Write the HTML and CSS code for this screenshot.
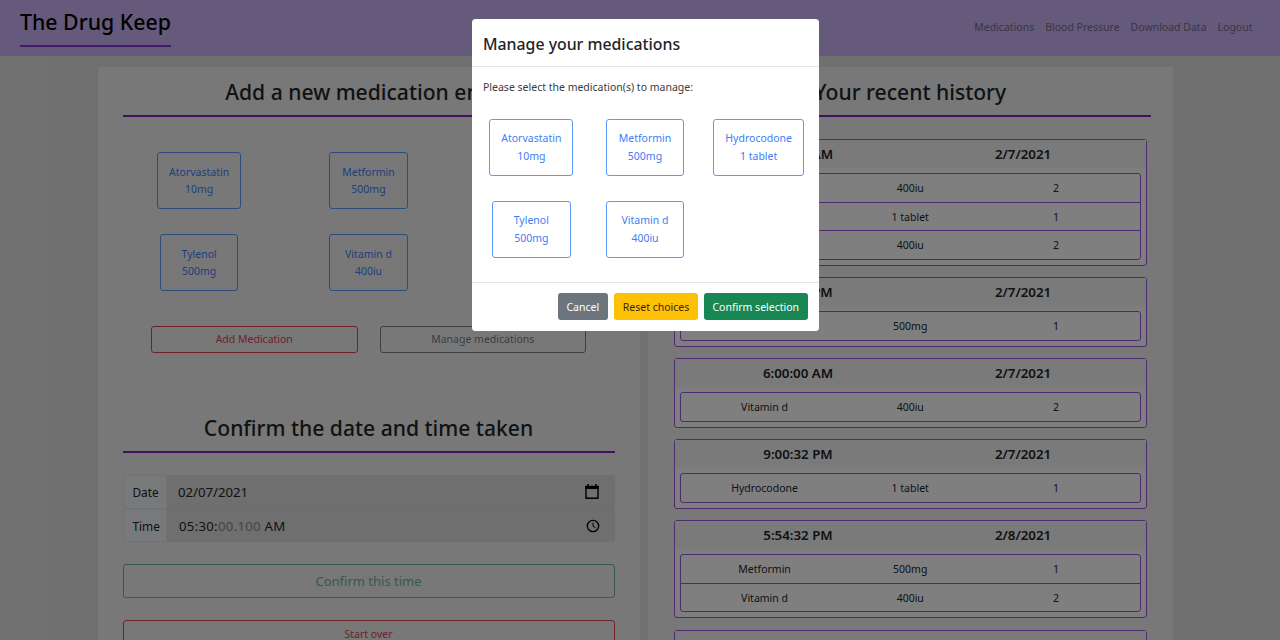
FILE: index.html
```html
<!DOCTYPE html>
<html lang="en">
<head>
<meta charset="utf-8">
<title>The Drug Keep</title>
<link rel="stylesheet" href="styles.css">
</head>
<body>
<header class="topbar">
  <h1 class="brand">The Drug Keep</h1>
  <nav class="nav"><a>Medications</a><a>Blood Pressure</a><a>Download Data</a><a>Logout</a></nav>
</header>
<main class="columns">
  <section class="panel entry">
    <h2 class="heading first">Add a new medication entry</h2>
    <div class="meds">
      <div class="cell"><button class="med">Atorvastatin<br>10mg</button></div>
      <div class="cell"><button class="med">Metformin<br>500mg</button></div>
      <div class="cell"></div>
      <div class="cell"><button class="med">Tylenol<br>500mg</button></div>
      <div class="cell"><button class="med">Vitamin d<br>400iu</button></div>
    </div>
    <div class="actions">
      <button class="btn danger">Add Medication</button>
      <button class="btn muted">Manage medications</button>
    </div>
    <h2 class="heading">Confirm the date and time taken</h2>
    <div class="field">
      <label class="field-label date-label">Date</label>
      <div class="field-input"><span>02/07/2021</span>
        <svg class="cal" viewBox="0 0 14 15"><path d="M1 2.5h12v11.7H1z" fill="none" stroke="#000" stroke-width="1.4"/><path d="M.4 2h13.200v3H.4zM2.300 0h1.500v3H2.300zM10.200 0h1.500v3h-1.500z"/></svg>
      </div>
    </div>
    <div class="field second">
      <label class="field-label">Time</label>
      <div class="field-input"><span>05:30:<i class="dim">00.100</i> AM</span>
        <svg class="clock" viewBox="0 0 14 14"><circle cx="7" cy="7" r="5.700" fill="none" stroke="#000" stroke-width="1.300"/><path d="M7 3.700v3.500l2.500 1.600" fill="none" stroke="#000" stroke-width="1"/></svg>
      </div>
    </div>
    <button class="btn confirm">Confirm this time</button>
    <button class="btn danger restart">Start over</button>
  </section>
  <section class="panel history">
    <h2 class="heading">Your recent history</h2>
    <div class="log">
      <article class="card"><div class="card-head"><b>6:00:00 AM</b><b>2/7/2021</b></div>
        <div class="doses"><div class="dose"><span>Vitamin d</span><span>400iu</span><span>2</span></div><div class="dose"><span>Tylenol</span><span>1 tablet</span><span>1</span></div><div class="dose"><span>Vitamin d</span><span>400iu</span><span>2</span></div></div></article>
      <article class="card"><div class="card-head"><b>5:30:00 PM</b><b>2/7/2021</b></div>
        <div class="doses"><div class="dose"><span>Metformin</span><span>500mg</span><span>1</span></div></div></article>
      <article class="card"><div class="card-head"><b>6:00:00 AM</b><b>2/7/2021</b></div>
        <div class="doses"><div class="dose"><span>Vitamin d</span><span>400iu</span><span>2</span></div></div></article>
      <article class="card"><div class="card-head"><b>9:00:32 PM</b><b>2/7/2021</b></div>
        <div class="doses"><div class="dose"><span>Hydrocodone</span><span>1 tablet</span><span>1</span></div></div></article>
      <article class="card"><div class="card-head"><b>5:54:32 PM</b><b>2/8/2021</b></div>
        <div class="doses"><div class="dose"><span>Metformin</span><span>500mg</span><span>1</span></div><div class="dose"><span>Vitamin d</span><span>400iu</span><span>2</span></div></div></article>
      <article class="card"><div class="card-head"><b>6:58:41 PM</b><b>2/8/2021</b></div></article>
    </div>
  </section>
</main>
<div class="backdrop">
  <div class="modal">
    <div class="modal-head">Manage your medications</div>
    <div class="modal-body">
      <p class="prompt">Please select the medication(s) to manage:</p>
      <div class="meds modal-meds">
        <div class="cell"><button class="med">Atorvastatin<br>10mg</button></div>
        <div class="cell"><button class="med">Metformin<br>500mg</button></div>
        <div class="cell"><button class="med">Hydrocodone<br>1 tablet</button></div>
        <div class="cell"><button class="med">Tylenol<br>500mg</button></div>
        <div class="cell"><button class="med">Vitamin d<br>400iu</button></div>
      </div>
    </div>
    <div class="modal-foot">
      <button class="solid grey">Cancel</button>
      <button class="solid amber">Reset choices</button>
      <button class="solid green">Confirm selection</button>
    </div>
  </div>
</div>
</body>
</html>
```
FILE: styles.css
```css
* { box-sizing: border-box; }
html, body { height: 640px; overflow: hidden; }
body {
  margin: 0;
  background: linear-gradient(90deg, #e4e4e4, #dfdfdf 8%, #e2e2e2 50%, #dfdfdf 92%, #dedede);
  color: #212529;
  font-family: "Noto Sans", "Open Sans", sans-serif;
  font-size: 10.5px;
}
button { font: inherit; margin: 0; padding: 0; border-radius: 3px; white-space: nowrap; }
.topbar {
  height: 55.5px;
  padding: 10px 27.5px 0 20px;
  display: flex;
  justify-content: space-between;
  background: #cab5f8;
}
.brand {
  margin: 0;
  width: 151px;
  height: 37px;
  border-bottom: 2px solid #8836d8;
  color: #000;
  font-size: 21.3px;
  font-weight: 500;
  line-height: 23px;
  white-space: nowrap;
}
.nav { display: flex; gap: 11px; padding-top: 8px; line-height: 18px; color: #746b85; }
.columns { display: flex; gap: 8px; padding: 11.5px 107.5px 0 97.5px; height: 584.5px; }
.panel { height: 573px; background: #f0f0f0; overflow: hidden; }
.entry { width: 542.5px; padding: 0 25.5px 0 25px; }
.history { width: 524.5px; padding: 0 22px; }
.heading {
  margin: 0;
  height: 50px;
  padding-top: 12px;
  border-bottom: 2px solid #8423c7;
  font-size: 21.1px;
  font-weight: 500;
  line-height: 25.5px;
  text-align: center;
  white-space: nowrap;
}
.first { padding-right: 4px; }
.meds { display: grid; grid-template-columns: repeat(3, 1fr); row-gap: 25px; text-align: center; }
.entry .meds { margin: 35px -8px 0; }
.med {
  min-width: 78.5px;
  height: 57px;
  padding: 0 11px;
  border: 1px solid #5a9bff;
  background: none;
  color: #3d7ef5;
  line-height: 17px;
}
.cell { height: 57px; }
.actions { display: flex; gap: 22px; padding: 34.5px 28.5px 0; }
.actions .btn { flex: 1; height: 27px; }
.btn { border: 1px solid; background: none; }
.danger { color: #dc4553; }
.muted { color: #7a7f84; }
.actions + .heading { margin-top: 50px; }
.field { display: flex; height: 33.5px; margin-top: 22.5px; font-size: 13.2px; }
.second { margin-top: 0; }
.field-label {
  width: 44.5px;
  padding-left: 9px;
  border: 1px solid #e0e4e8;
  border-radius: 3px 0 0 3px;
  background: #f0f2f5;
  font-size: 11.8px;
  line-height: 33px;
}
.field-input {
  flex: 1;
  display: flex;
  align-items: center;
  justify-content: space-between;
  padding: 1px 14px 0 11px;
  border-bottom: 1px solid #d8dade;
  border-radius: 0 3px 3px 0;
  background: #dedede;
}
.second .field-input { border: 0; padding-left: 12px; }
.second .field-input span { letter-spacing: .28px; }
.dim { color: #888; font-style: normal; }
.cal { width: 14px; height: 15px; margin-right: 1.5px; }
.clock { width: 14px; height: 14px; margin-right: .5px; }
.confirm, .restart { display: block; width: 100%; height: 34px; }
.confirm { margin-top: 22px; color: #6fb496; font-size: 13px; }
.restart { margin-top: 22px; height: 27px; }
.log { display: grid; gap: 11.5px; margin: 22.3px 3.5px 0 4px; }
.card { border: 1px solid #9d55e0; border-radius: 3px; background: #fcfcfc; padding-bottom: 5px; }
.card-head {
  height: 27.5px;
  display: grid;
  grid-template-columns: 225px 225px;
  justify-content: center;
  background: #f4f4f4;
  text-align: center;
  font-size: 13.3px;
  line-height: 28.5px;
}
.card-head b { font-weight: 600; }
.doses { margin: 5.5px 5.5px 0 5px; border: 1px solid #9d55e0; border-radius: 3px; background: #fff; }
.dose {
  height: 27.5px;
  display: grid;
  grid-template-columns: repeat(3, 145.7px);
  justify-content: center;
  text-align: center;
  line-height: 28.5px;
}
.dose + .dose { height: 28.5px; border-top: 1px solid #9d55e0; }
.backdrop {
  position: absolute;
  inset: 0;
  display: flex;
  justify-content: center;
  align-items: flex-start;
  padding: 18.5px 0 0 10px;
  background: rgba(0, 0, 0, .5);
}
.modal { width: 347px; height: 312.5px; border-radius: 3.5px; background: #fff; }
.modal-head {
  height: 48.5px;
  padding-left: 11.5px;
  border-bottom: 1px solid #e3e5e7;
  font-size: 15.85px;
  font-weight: 500;
  line-height: 50px;
}
.modal-body { height: 214.5px; padding: 11px 3px 0; }
.prompt { margin: 0; padding-left: 8.5px; line-height: 18px; color: #383c40; }
.modal-meds { margin-top: 22.5px; }
.modal-meds .med { line-height: 17.3px; padding-top: 1px; }
.modal-foot {
  display: flex;
  justify-content: flex-end;
  gap: 6px;
  padding: 10.5px 11px 0;
  border-top: 1px solid #e3e5e7;
}
.solid { height: 27px; border: 0; color: #fff; }
.grey { width: 50.5px; background: #6c757d; }
.amber { width: 84px; background: #ffc107; color: #332700; }
.green { width: 103.5px; background: #198754; }
```
